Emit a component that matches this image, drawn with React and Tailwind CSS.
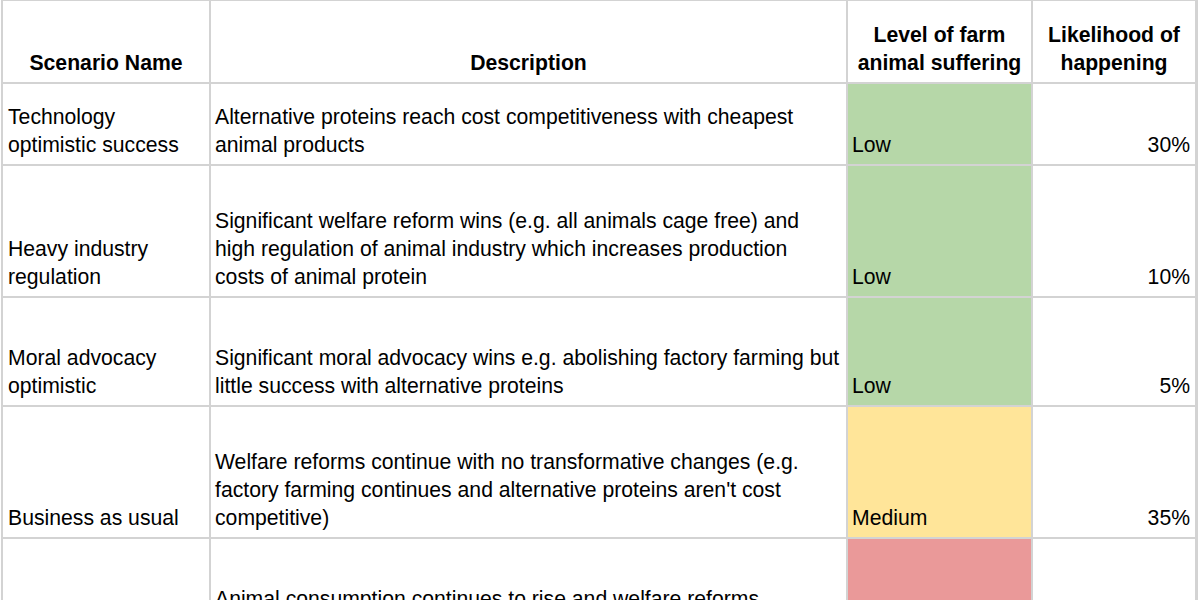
import React from 'react';

const rows = [
  {
    name: ['Technology', 'optimistic success'],
    desc: ['Alternative proteins reach cost competitiveness with cheapest', 'animal products'],
    level: 'Low',
    levelBg: 'bg-[#b6d7a8]',
    pct: '30%',
    h: 'h-[80px]',
  },
  {
    name: ['Heavy industry', 'regulation'],
    desc: [
      'Significant welfare reform wins (e.g. all animals cage free) and',
      'high regulation of animal industry which increases production',
      'costs of animal protein',
    ],
    level: 'Low',
    levelBg: 'bg-[#b6d7a8]',
    pct: '10%',
    h: 'h-[130px]',
  },
  {
    name: ['Moral advocacy', 'optimistic'],
    desc: [
      'Significant moral advocacy wins e.g. abolishing factory farming but',
      'little success with alternative proteins',
    ],
    level: 'Low',
    levelBg: 'bg-[#b6d7a8]',
    pct: '5%',
    h: 'h-[107px]',
  },
  {
    name: ['Business as usual'],
    desc: [
      'Welfare reforms continue with no transformative changes (e.g.',
      "factory farming continues and alternative proteins aren't cost",
      'competitive)',
    ],
    level: 'Medium',
    levelBg: 'bg-[#ffe599]',
    pct: '35%',
    h: 'h-[130px]',
  },
  {
    name: [''],
    desc: ['Animal consumption continues to rise and welfare reforms', 'stall'],
    level: '',
    levelBg: 'bg-[#ea9999]',
    pct: '',
    h: 'h-[107px]',
  },
];

function Lines({ lines }) {
  return lines.map((l, i) => (
    <span key={i} className="block whitespace-nowrap">
      {l}
    </span>
  ));
}

function Cell({ className = '', children }) {
  return (
    <div className={`flex flex-col justify-end pb-[5px] ${className}`}>{children}</div>
  );
}

export default function App() {
  return (
    <div className="w-[1200px] h-[600px] overflow-hidden bg-white pl-[1px]">
      <div
        className="grid w-[1197px] gap-[2px] bg-[#d3d3d3] px-[2px] pt-[1px] pb-[2px] text-[21.2px] leading-[28px] text-black"
        style={{ fontFamily: '"Liberation Sans", Arial, sans-serif' }}
      >
        <div className="grid grid-cols-[206px_635px_183px_162px] gap-[2px]">
          <Cell className="h-[81px] bg-white items-center text-center font-bold pb-[5px]">
            <Lines lines={['Scenario Name']} />
          </Cell>
          <Cell className="h-[81px] bg-white items-center text-center font-bold pb-[5px]">
            <Lines lines={['Description']} />
          </Cell>
          <Cell className="h-[81px] bg-white items-center text-center font-bold pb-[5px]">
            <Lines lines={['Level of farm', 'animal suffering']} />
          </Cell>
          <Cell className="h-[81px] bg-white items-center text-center font-bold pb-[5px]">
            <Lines lines={['Likelihood of', 'happening']} />
          </Cell>
        </div>
        {rows.map((r, i) => (
          <div key={i} className="grid grid-cols-[206px_635px_183px_162px] gap-[2px]">
            <Cell className={`${r.h} bg-white pl-[5px]`}>
              <Lines lines={r.name} />
            </Cell>
            <Cell className={`${r.h} bg-white pl-[4px]`}>
              <Lines lines={r.desc} />
            </Cell>
            <Cell className={`${r.h} ${r.levelBg} pl-[4px]`}>
              <Lines lines={[r.level]} />
            </Cell>
            <Cell className={`${r.h} bg-white pr-[5px] text-right`}>
              <Lines lines={[r.pct]} />
            </Cell>
          </div>
        ))}
      </div>
    </div>
  );
}
